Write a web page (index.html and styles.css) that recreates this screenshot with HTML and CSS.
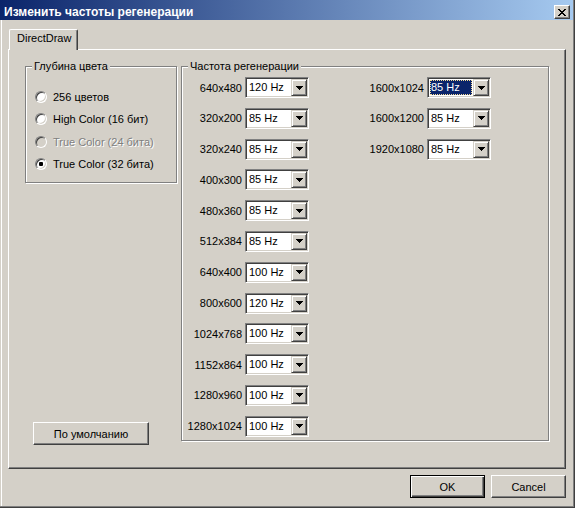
FILE: index.html
```html
<!DOCTYPE html>
<html lang="ru">
<head>
<meta charset="utf-8">
<title>Изменить частоты регенерации</title>
<link rel="stylesheet" href="styles.css">
</head>
<body>
<div class="window">
  <div class="frame">
    <div class="titlebar">
      <span class="title">Изменить частоты регенерации</span>
      <span class="close"><svg width="8" height="7" viewBox="0 0 8 7" shape-rendering="crispEdges"><path fill="#000" d="M0 0h2v1h-2z M6 0h2v1h-2z M1 1h2v1h-2z M5 1h2v1h-2z M2 2h4v1h-4z M3 3h2v1h-2z M2 4h4v1h-4z M1 5h2v1h-2z M5 5h2v1h-2z M0 6h2v1h-2z M6 6h2v1h-2z"/></svg></span>
    </div>
    <div class="client">
      <div class="tabs"><div class="tab">DirectDraw</div></div>
      <div class="panel">
        <div class="leftcol">
          <div class="group depth">
            <div class="group-title">Глубина цвета</div>
            <div class="radios">
              <div class="radio-row"><span class="radio"></span><span>256 цветов</span></div>
              <div class="radio-row"><span class="radio"></span><span>High Color (16 бит)</span></div>
              <div class="radio-row"><span class="radio disabled"></span><span class="disabled-text">True Color (24 бита)</span></div>
              <div class="radio-row"><span class="radio checked"></span><span>True Color (32 бита)</span></div>
            </div>
          </div>
          <div class="btn defaults">По умолчанию</div>
        </div>
        <div class="group rates">
          <div class="group-title">Частота регенерации</div>
          <div class="rate-cols">
            <div class="rate-col col1">
              <div class="rate-row"><span class="label">640x480</span><div class="combo"><span class="combo-text">120 Hz</span><span class="combo-btn"><svg width="7" height="4" viewBox="0 0 7 4" shape-rendering="crispEdges"><path d="M0 0h7v1h-7z M1 1h5v1h-5z M2 2h3v1h-3z M3 3h1v1h-1z"/></svg></span></div></div>
              <div class="rate-row"><span class="label">320x200</span><div class="combo"><span class="combo-text">85 Hz</span><span class="combo-btn"><svg width="7" height="4" viewBox="0 0 7 4" shape-rendering="crispEdges"><path d="M0 0h7v1h-7z M1 1h5v1h-5z M2 2h3v1h-3z M3 3h1v1h-1z"/></svg></span></div></div>
              <div class="rate-row"><span class="label">320x240</span><div class="combo"><span class="combo-text">85 Hz</span><span class="combo-btn"><svg width="7" height="4" viewBox="0 0 7 4" shape-rendering="crispEdges"><path d="M0 0h7v1h-7z M1 1h5v1h-5z M2 2h3v1h-3z M3 3h1v1h-1z"/></svg></span></div></div>
              <div class="rate-row"><span class="label">400x300</span><div class="combo"><span class="combo-text">85 Hz</span><span class="combo-btn"><svg width="7" height="4" viewBox="0 0 7 4" shape-rendering="crispEdges"><path d="M0 0h7v1h-7z M1 1h5v1h-5z M2 2h3v1h-3z M3 3h1v1h-1z"/></svg></span></div></div>
              <div class="rate-row"><span class="label">480x360</span><div class="combo"><span class="combo-text">85 Hz</span><span class="combo-btn"><svg width="7" height="4" viewBox="0 0 7 4" shape-rendering="crispEdges"><path d="M0 0h7v1h-7z M1 1h5v1h-5z M2 2h3v1h-3z M3 3h1v1h-1z"/></svg></span></div></div>
              <div class="rate-row"><span class="label">512x384</span><div class="combo"><span class="combo-text">85 Hz</span><span class="combo-btn"><svg width="7" height="4" viewBox="0 0 7 4" shape-rendering="crispEdges"><path d="M0 0h7v1h-7z M1 1h5v1h-5z M2 2h3v1h-3z M3 3h1v1h-1z"/></svg></span></div></div>
              <div class="rate-row"><span class="label">640x400</span><div class="combo"><span class="combo-text">100 Hz</span><span class="combo-btn"><svg width="7" height="4" viewBox="0 0 7 4" shape-rendering="crispEdges"><path d="M0 0h7v1h-7z M1 1h5v1h-5z M2 2h3v1h-3z M3 3h1v1h-1z"/></svg></span></div></div>
              <div class="rate-row"><span class="label">800x600</span><div class="combo"><span class="combo-text">120 Hz</span><span class="combo-btn"><svg width="7" height="4" viewBox="0 0 7 4" shape-rendering="crispEdges"><path d="M0 0h7v1h-7z M1 1h5v1h-5z M2 2h3v1h-3z M3 3h1v1h-1z"/></svg></span></div></div>
              <div class="rate-row"><span class="label">1024x768</span><div class="combo"><span class="combo-text">100 Hz</span><span class="combo-btn"><svg width="7" height="4" viewBox="0 0 7 4" shape-rendering="crispEdges"><path d="M0 0h7v1h-7z M1 1h5v1h-5z M2 2h3v1h-3z M3 3h1v1h-1z"/></svg></span></div></div>
              <div class="rate-row"><span class="label">1152x864</span><div class="combo"><span class="combo-text">100 Hz</span><span class="combo-btn"><svg width="7" height="4" viewBox="0 0 7 4" shape-rendering="crispEdges"><path d="M0 0h7v1h-7z M1 1h5v1h-5z M2 2h3v1h-3z M3 3h1v1h-1z"/></svg></span></div></div>
              <div class="rate-row"><span class="label">1280x960</span><div class="combo"><span class="combo-text">100 Hz</span><span class="combo-btn"><svg width="7" height="4" viewBox="0 0 7 4" shape-rendering="crispEdges"><path d="M0 0h7v1h-7z M1 1h5v1h-5z M2 2h3v1h-3z M3 3h1v1h-1z"/></svg></span></div></div>
              <div class="rate-row"><span class="label">1280x1024</span><div class="combo"><span class="combo-text">100 Hz</span><span class="combo-btn"><svg width="7" height="4" viewBox="0 0 7 4" shape-rendering="crispEdges"><path d="M0 0h7v1h-7z M1 1h5v1h-5z M2 2h3v1h-3z M3 3h1v1h-1z"/></svg></span></div></div>
            </div>
            <div class="rate-col col2">
              <div class="rate-row"><span class="label">1600x1024</span><div class="combo"><span class="combo-text selected"><span class="hl">85 Hz</span></span><span class="combo-btn"><svg width="7" height="4" viewBox="0 0 7 4" shape-rendering="crispEdges"><path d="M0 0h7v1h-7z M1 1h5v1h-5z M2 2h3v1h-3z M3 3h1v1h-1z"/></svg></span></div></div>
              <div class="rate-row"><span class="label">1600x1200</span><div class="combo"><span class="combo-text">85 Hz</span><span class="combo-btn"><svg width="7" height="4" viewBox="0 0 7 4" shape-rendering="crispEdges"><path d="M0 0h7v1h-7z M1 1h5v1h-5z M2 2h3v1h-3z M3 3h1v1h-1z"/></svg></span></div></div>
              <div class="rate-row"><span class="label">1920x1080</span><div class="combo"><span class="combo-text">85 Hz</span><span class="combo-btn"><svg width="7" height="4" viewBox="0 0 7 4" shape-rendering="crispEdges"><path d="M0 0h7v1h-7z M1 1h5v1h-5z M2 2h3v1h-3z M3 3h1v1h-1z"/></svg></span></div></div>
            </div>
          </div>
        </div>
      </div>
      <div class="buttons">
        <div class="btn default">OK</div>
        <div class="btn">Cancel</div>
      </div>
    </div>
  </div>
</div>
</body>
</html>
```

FILE: styles.css
```css
* { box-sizing: border-box; }
html, body { margin: 0; padding: 0; }
body {
  font-family: "Liberation Sans", Arial, sans-serif;
  font-size: 11px;
  color: #000;
  background: #d4d0c8;
}
.window {
  width: 575px;
  height: 508px;
  display: flex;
  background: #d4d0c8;
  border-right: 1px solid #404040;
  border-bottom: 1px solid #404040;
}
.frame {
  flex: 1;
  display: flex;
  flex-direction: column;
  border-right: 1px solid #808080;
  border-bottom: 1px solid #808080;
}
.titlebar {
  height: 20px;
  flex: none;
  display: flex;
  align-items: flex-end;
  justify-content: space-between;
  padding: 0 3px 1px 4px;
  background: linear-gradient(to right, #0a246a, #a6caf0);
}
.title {
  color: #fff;
  font-weight: bold;
  font-size: 12px;
  line-height: 13px;
  white-space: nowrap;
}
.close {
  width: 16px;
  height: 14px;
  display: flex;
  align-items: center;
  justify-content: center;
  background: #d4d0c8;
  border: 1px solid;
  border-color: #fff #404040 #404040 #fff;
  box-shadow: inset -1px -1px 0 #808080;
}
.close svg { display: block; }
.client {
  flex: 1;
  display: flex;
  flex-direction: column;
  margin-left: 1px;
  border-left: 1px solid #fff;
  padding: 9px 7px 8px 6px;
}
.tabs { display: flex; padding-left: 1px; }
.tab {
  position: relative;
  z-index: 1;
  width: 69px;
  height: 21px;
  margin-bottom: -1px;
  padding: 2px 0 0 7px;
  line-height: 13px;
  background: #d4d0c8;
  border: 1px solid #fff;
  border-bottom: none;
  border-right-color: #404040;
  border-radius: 2px 2px 0 0;
  box-shadow: inset -1px 0 0 #808080;
}
.panel {
  height: 420px;
  flex: none;
  display: flex;
  gap: 4px;
  padding: 16px 16px 27px 16px;
  border: 1px solid;
  border-color: #fff #404040 #404040 #fff;
  box-shadow: inset -1px -1px 0 #808080;
}
.leftcol {
  width: 152px;
  display: flex;
  flex-direction: column;
}
.group {
  border: 1px solid #808080;
  box-shadow: inset 1px 1px 0 #fff, 1px 1px 0 #fff;
}
.group-title {
  width: max-content;
  margin: -7px 0 0 6px;
  padding: 0 2px;
  line-height: 13px;
  background: #d4d0c8;
  white-space: nowrap;
}
.radios { margin-top: 13px; padding: 0 0 7px 9px; }
.radio-row {
  height: 22.33px;
  display: flex;
  align-items: center;
  gap: 6px;
  white-space: nowrap;
}
.radio {
  flex: none;
  width: 12px;
  height: 12px;
  border-radius: 50%;
  background: #fff;
  border: 1px solid;
  border-color: #808080 #fff #fff #808080;
  box-shadow: inset 1px 1px 0 #404040, inset -1px -1px 0 #d4d0c8;
  display: flex;
  align-items: center;
  justify-content: center;
}
.radio.checked::after {
  content: "";
  width: 4px;
  height: 4px;
  border-radius: 1px;
  background: #000;
}
.radio.disabled { background: #d4d0c8; }
.disabled-text { color: #808080; text-shadow: 1px 1px 0 #fff; }
.btn {
  width: 75px;
  height: 23px;
  display: flex;
  align-items: center;
  justify-content: center;
  background: #d4d0c8;
  border: 1px solid;
  border-color: #fff #404040 #404040 #fff;
  box-shadow: inset -1px -1px 0 #808080;
  white-space: nowrap;
}
.btn.default {
  border-color: #000;
  box-shadow: inset 1px 1px 0 #fff, inset -1px -1px 0 #404040, inset -2px -2px 0 #808080;
}
.btn.defaults {
  width: 116px;
  margin: auto 0 -4px 8px;
}
.rates {
  flex: 1;
  display: flex;
  flex-direction: column;
}
.rate-cols { display: flex; margin-top: 4px; }
.rate-col {
  display: flex;
  flex-direction: column;
  gap: 9.8px;
}
.rate-row {
  height: 21px;
  display: flex;
  align-items: center;
  gap: 3px;
}
.label { text-align: right; white-space: nowrap; }
.col1 .label { width: 60px; }
.col2 .label { width: 115px; }
.combo {
  width: 64px;
  height: 21px;
  display: flex;
  padding: 1px;
  background: #fff;
  border: 1px solid;
  border-color: #808080 #fff #fff #808080;
  box-shadow: inset 1px 1px 0 #404040, inset -1px -1px 0 #d4d0c8;
}
.combo-text {
  flex: 1;
  padding-left: 2px;
  line-height: 17px;
  white-space: nowrap;
}
.combo-text.selected { padding: 1px; line-height: 13px; }
.hl {
  display: block;
  height: 15px;
  background: #0a246a;
  color: #fff;
  border: 1px dotted #f5db95;
}
.combo-btn {
  flex: none;
  width: 16px;
  height: 17px;
  display: flex;
  align-items: center;
  justify-content: center;
  background: #d4d0c8;
  border: 1px solid;
  border-color: #d4d0c8 #404040 #404040 #d4d0c8;
  box-shadow: inset 1px 1px 0 #fff, inset -1px -1px 0 #808080;
}
.combo-btn svg { display: block; }
.buttons {
  display: flex;
  justify-content: flex-end;
  gap: 6px;
  margin-top: 6px;
}
```
